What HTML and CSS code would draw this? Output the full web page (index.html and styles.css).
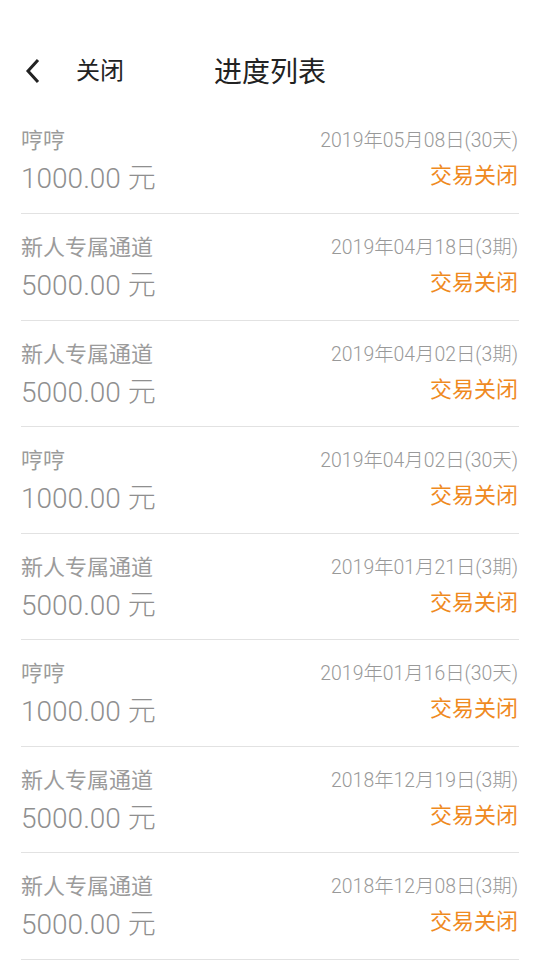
FILE: index.html
```html
<!DOCTYPE html>
<html lang="zh-CN">
<head>
    <meta charset="UTF-8">
    <meta name="viewport" content="width=device-width, initial-scale=1.0">
    <title>进度列表</title>
    <link rel="stylesheet" href="styles.css">
</head>
<body>
    <div class="header">
        <a class="back" href="#">
            <svg width="18" height="26" viewBox="0 0 18 26"><path d="M14 2 L4 13 L14 24" fill="none" stroke="#222" stroke-width="3" stroke-linejoin="miter"/></svg>
            <span>关闭</span>
        </a>
        <div class="title">进度列表</div>
    </div>

    <ul class="list">
        <li class="item">
            <div class="row"><span class="name">哼哼</span><span class="date">2019年05月08日(30天)</span></div>
            <div class="row"><span class="amount">1000.00 元</span><span class="status">交易关闭</span></div>
        </li>
        <li class="item">
            <div class="row"><span class="name">新人专属通道</span><span class="date">2019年04月18日(3期)</span></div>
            <div class="row"><span class="amount">5000.00 元</span><span class="status">交易关闭</span></div>
        </li>
        <li class="item">
            <div class="row"><span class="name">新人专属通道</span><span class="date">2019年04月02日(3期)</span></div>
            <div class="row"><span class="amount">5000.00 元</span><span class="status">交易关闭</span></div>
        </li>
        <li class="item">
            <div class="row"><span class="name">哼哼</span><span class="date">2019年04月02日(30天)</span></div>
            <div class="row"><span class="amount">1000.00 元</span><span class="status">交易关闭</span></div>
        </li>
        <li class="item">
            <div class="row"><span class="name">新人专属通道</span><span class="date">2019年01月21日(3期)</span></div>
            <div class="row"><span class="amount">5000.00 元</span><span class="status">交易关闭</span></div>
        </li>
        <li class="item">
            <div class="row"><span class="name">哼哼</span><span class="date">2019年01月16日(30天)</span></div>
            <div class="row"><span class="amount">1000.00 元</span><span class="status">交易关闭</span></div>
        </li>
        <li class="item">
            <div class="row"><span class="name">新人专属通道</span><span class="date">2018年12月19日(3期)</span></div>
            <div class="row"><span class="amount">5000.00 元</span><span class="status">交易关闭</span></div>
        </li>
        <li class="item">
            <div class="row"><span class="name">新人专属通道</span><span class="date">2018年12月08日(3期)</span></div>
            <div class="row"><span class="amount">5000.00 元</span><span class="status">交易关闭</span></div>
        </li>
    </ul>
</body>
</html>
```

FILE: styles.css
```css
body {
    margin: 0;
    background-color: #fff;
    font-family: Roboto, "Noto Sans CJK SC", sans-serif;
    overflow: hidden;
}

/* ヘッダー */
.header {
    position: relative;
    height: 107.4px;
    display: flex;
    align-items: center;
    justify-content: center;
    padding-bottom: 4px;
    box-sizing: border-box;
}

.back {
    position: absolute;
    left: 24px;
    top: 58px;
    display: flex;
    align-items: center;
    gap: 34px;
    text-decoration: none;
    color: #222;
    font-size: 24px;
    line-height: 26px;
}

.back svg {
    display: block;
}

.title {
    margin-top: 36px;
    font-size: 28px;
    color: #222;
}

/* リスト */
.list {
    list-style: none;
    margin: 0 21px;
    padding: 0;
}

.item {
    height: 106.57px;
    box-sizing: border-box;
    border-bottom: 1px solid #e2e2e2;
    padding-top: 21px;
}

.row {
    display: flex;
    justify-content: space-between;
    align-items: center;
}

.name {
    font-size: 22px;
    line-height: 26px;
    color: #9b9b9b;
}

.date {
    font-size: 19.4px;
    line-height: 26px;
    color: #999;
    font-weight: 300;
    margin-right: 1px;
}

.amount {
    font-size: 28px;
    line-height: 38px;
    color: #8f8f8f;
    font-weight: 300;
    margin-top: 6px;
}

.status {
    font-size: 22px;
    line-height: 30px;
    color: #ef8a1f;
    margin-right: 1px;
}
```
